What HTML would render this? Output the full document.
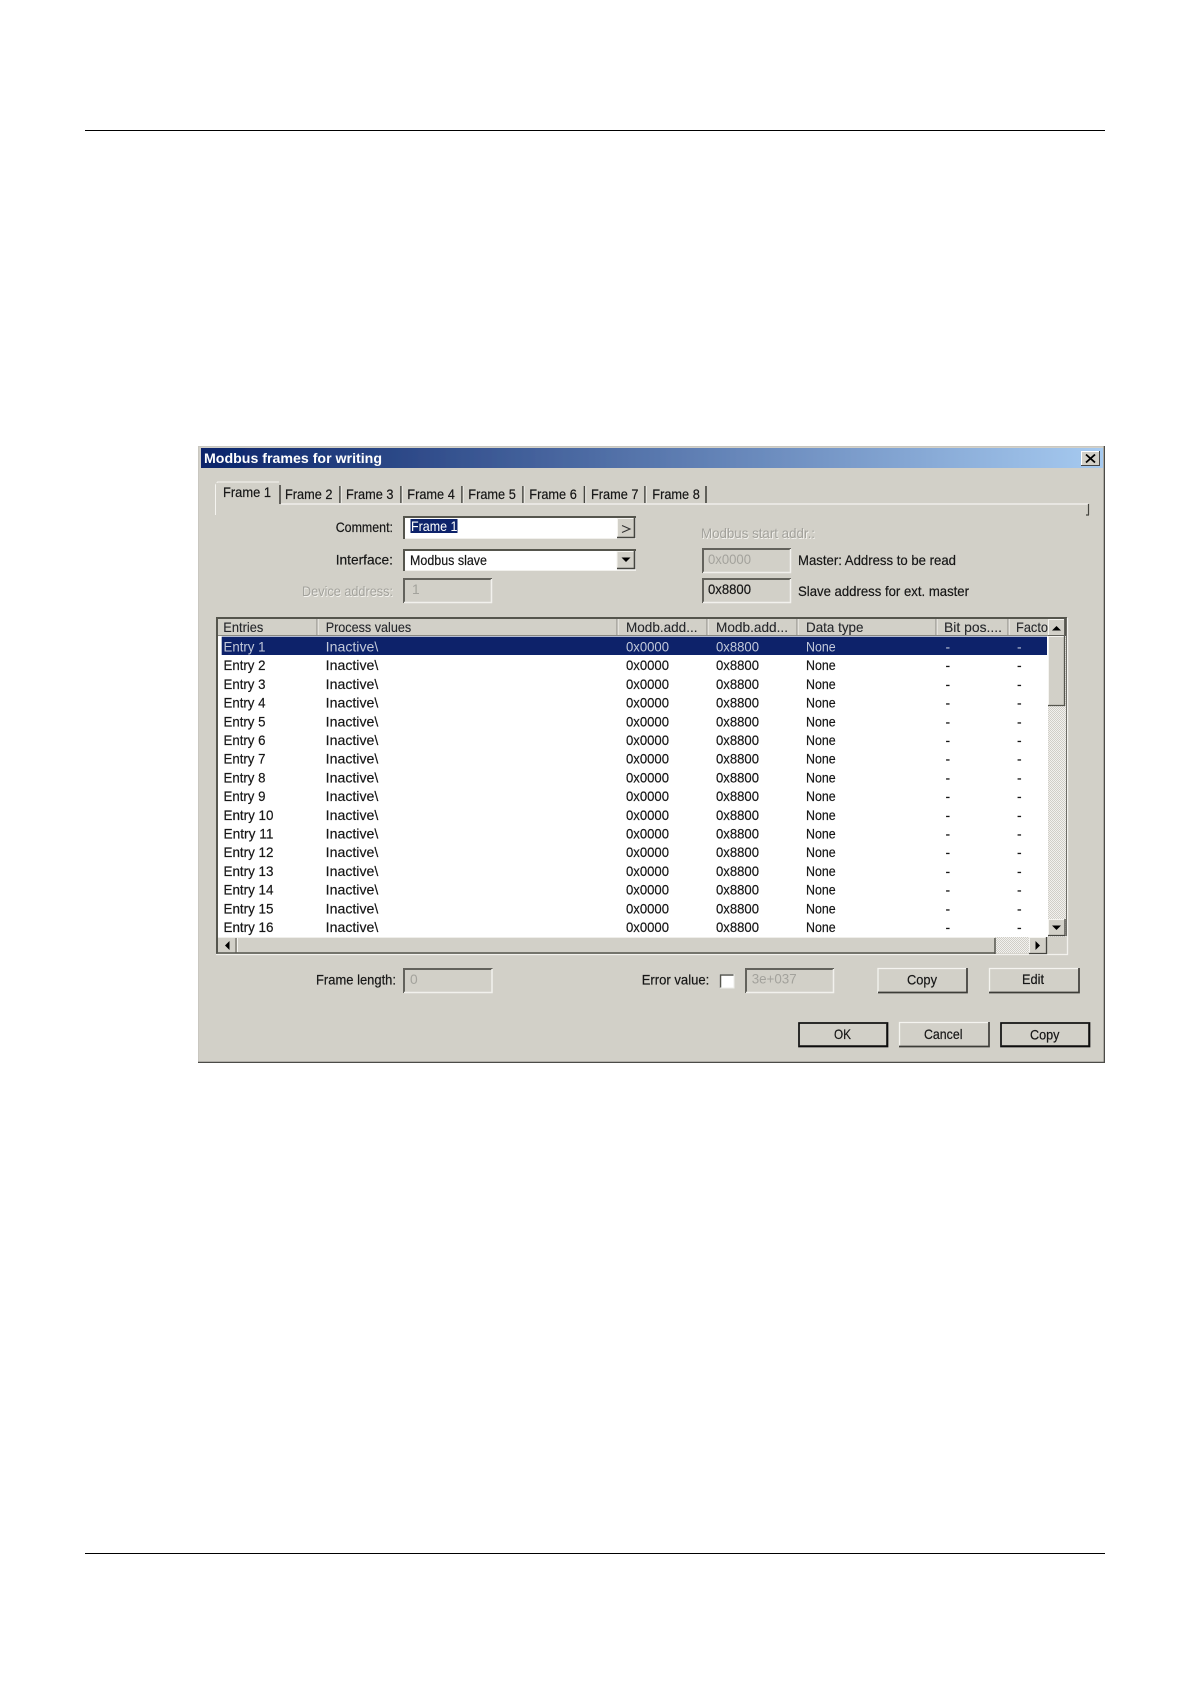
<!DOCTYPE html>
<html><head><meta charset="utf-8"><title>Modbus frames for writing</title>
<style>
html,body{margin:0;padding:0;background:#fff}
svg{display:block}
text{font-family:"Liberation Sans",Arial,sans-serif;font-size:13.8px;fill:#151515;stroke:#151515;stroke-width:.18px}
.g{fill:#a3a29c;stroke:none}
.gs{fill:#f4f3ef;stroke:none}
.w{fill:#fff;stroke:none}
.hd{fill:#25282c;stroke:#25282c;stroke-width:.1px}
.s text{fill:#c3c8da;stroke:none}
</style></head><body>
<svg xmlns="http://www.w3.org/2000/svg" width="1190" height="1684" viewBox="0 0 1190 1684">
<defs>
<linearGradient id="tg" x1="0" x2="1" y1="0" y2="0"><stop offset="0" stop-color="#0a246a"/><stop offset="1" stop-color="#a6caf0"/></linearGradient>
<pattern id="di" width="2" height="2" patternUnits="userSpaceOnUse"><rect width="2" height="2" fill="#f2f1ee"/><rect width="1" height="1" fill="#d0cec7"/><rect x="1" y="1" width="1" height="1" fill="#d0cec7"/></pattern>
<filter id="b" x="0" y="0" width="100%" height="100%"><feGaussianBlur stdDeviation="0.35"/></filter>
</defs>
<rect width="1190" height="1684" fill="#fff"/>
<rect x="85" y="130" width="1020" height="1" fill="#000"/>
<rect x="85" y="1553" width="1020" height="1" fill="#000"/>
<g filter="url(#b)">
<!-- dialog -->
<rect x="198" y="446" width="907" height="617" fill="#d2d0c8"/>
<path d="M198.500 1062V446.500H1105" fill="none" stroke="#c9c7c0"/>
<path d="M1104.500 446V1062.500H198" fill="none" stroke="#4c4b47" stroke-width="1.600"/>
<rect x="201" y="448" width="902" height="20" fill="url(#tg)"/>
<text x="204" y="463" textLength="178" lengthAdjust="spacingAndGlyphs" class="w" style="font-weight:bold;font-size:13.500px">Modbus frames for writing</text>
<!-- close -->
<rect x="1081" y="451" width="19" height="15" fill="#d2d0c8"/>
<path d="M1081.500 466V451.500H1100" fill="none" stroke="#fff"/>
<path d="M1099.500 451V465.500H1081" fill="none" stroke="#444"/>
<path d="M1086 454.500L1095 462.500M1095 454.500L1086 462.500" stroke="#000" stroke-width="1.800"/>
<!-- tabs -->
<path d="M215.500 515V485l2-3H279" fill="none" stroke="#f5f4f0"/>
<rect x="216" y="483" width="63" height="22" fill="#d2d0c8"/>
<path d="M280 485V504" stroke="#45443f" stroke-width="1.600"/>
<path d="M281 504H1088" stroke="#efeeea" stroke-width="1.500"/>
<path d="M1088.500 504V515M1086 515H1089" stroke="#45443f" stroke-width="1.200"/>
<path d="M340 486V503M401 486V503M462 486V503M523 486V503M584.500 486V503M645 486V503M706 486V503" stroke="#45443f" stroke-width="1.600"/>
<path d="M341.200 486V503M402.200 486V503M463.200 486V503M524.200 486V503M585.700 486V503M646.200 486V503" stroke="#f0efeb"/>
<text x="223" y="497" textLength="48" lengthAdjust="spacingAndGlyphs">Frame 1</text>
<text x="285" y="499" textLength="47.500" lengthAdjust="spacingAndGlyphs">Frame 2</text>
<text x="346" y="499" textLength="47.500" lengthAdjust="spacingAndGlyphs">Frame 3</text>
<text x="407.300" y="499" textLength="47.500" lengthAdjust="spacingAndGlyphs">Frame 4</text>
<text x="468.300" y="499" textLength="47.500" lengthAdjust="spacingAndGlyphs">Frame 5</text>
<text x="529.300" y="499" textLength="47.500" lengthAdjust="spacingAndGlyphs">Frame 6</text>
<text x="591" y="499" textLength="47.500" lengthAdjust="spacingAndGlyphs">Frame 7</text>
<text x="652.300" y="499" textLength="47.500" lengthAdjust="spacingAndGlyphs">Frame 8</text>
<!-- comment -->
<text x="335.700" y="532" textLength="57.300" lengthAdjust="spacingAndGlyphs">Comment:</text>
<rect x="403" y="516" width="233" height="23" fill="#f1f0ec"/>
<rect x="405" y="518" width="230" height="20" fill="#fff"/>
<path d="M404 539V517H636" fill="none" stroke="#55544e" stroke-width="2"/>
<rect x="410.500" y="519" width="47" height="14" fill="#0a246a"/>
<text x="411" y="531" textLength="46.500" lengthAdjust="spacingAndGlyphs" class="w">Frame 1</text>
<rect x="617" y="518" width="18" height="20" fill="#d2d0c8"/>
<path d="M617.500 538V518.500H635" fill="none" stroke="#f5f4f0"/>
<path d="M634.500 518V537.500H617" fill="none" stroke="#45443f" stroke-width="1.600"/>
<path d="M622 525.500l8 3.500l-8 3.500" fill="none" stroke="#333" stroke-width="1.100"/>
<!-- interface -->
<text x="335.700" y="564.500" textLength="57.300" lengthAdjust="spacingAndGlyphs">Interface:</text>
<rect x="403" y="549" width="233" height="22" fill="#f1f0ec"/>
<rect x="405" y="551" width="230" height="19" fill="#fff"/>
<path d="M404 571V550H636" fill="none" stroke="#55544e" stroke-width="2"/>
<text x="410" y="565" textLength="77" lengthAdjust="spacingAndGlyphs">Modbus slave</text>
<rect x="616.500" y="551" width="18.500" height="18" fill="#d2d0c8"/>
<path d="M617 569V551.500H635" fill="none" stroke="#f5f4f0"/>
<path d="M634.500 551V568.500H617" fill="none" stroke="#45443f" stroke-width="1.600"/>
<path d="M621.500 557.500h9l-4.500 4.500z" fill="#000"/>
<!-- device -->
<text x="302" y="596" textLength="91" lengthAdjust="spacingAndGlyphs" class="gs" dx="0.800" dy="0.800">Device address:</text>
<text x="302" y="596" textLength="91" lengthAdjust="spacingAndGlyphs" class="g">Device address:</text>
<path d="M404 603V579H492" fill="none" stroke="#63625c" stroke-width="2"/>
<path d="M491.500 579V602.500H404" fill="none" stroke="#f2f1ed" stroke-width="1.500"/>
<text x="412" y="594" class="g">1</text>
<!-- modbus start -->
<text x="701" y="538" textLength="114" lengthAdjust="spacingAndGlyphs" class="gs" dx="0.800" dy="0.800">Modbus start addr.:</text>
<text x="701" y="538" textLength="114" lengthAdjust="spacingAndGlyphs" class="g">Modbus start addr.:</text>
<path d="M703 573V549H791" fill="none" stroke="#63625c" stroke-width="2"/>
<path d="M790.500 549V572.500H703" fill="none" stroke="#f2f1ed" stroke-width="1.500"/>
<text x="708" y="564" textLength="43" lengthAdjust="spacingAndGlyphs" class="g">0x0000</text>
<text x="798" y="565" textLength="158" lengthAdjust="spacingAndGlyphs">Master: Address to be read</text>
<path d="M703 603V579H791" fill="none" stroke="#63625c" stroke-width="2"/>
<path d="M790.500 579V602.500H703" fill="none" stroke="#f2f1ed" stroke-width="1.500"/>
<text x="708" y="594" textLength="43" lengthAdjust="spacingAndGlyphs">0x8800</text>
<text x="798" y="596" textLength="171" lengthAdjust="spacingAndGlyphs">Slave address for ext. master</text>
<!-- list -->
<rect x="216" y="617" width="852" height="338" fill="#d2d0c8"/>
<rect x="218" y="636" width="830" height="301" fill="#fff"/>
<path d="M217 955V618H1066V936" fill="none" stroke="#55544e" stroke-width="2"/>
<path d="M1067.500 618V954.500H216" fill="none" stroke="#f3f2ee" stroke-width="1.300"/>
<path d="M218 635.500H1048" stroke="#8a8982"/>
<path d="M318 619V635M618 619V635M708 619V635M798 619V635M937 619V635M1009 619V635" stroke="#f5f4f0"/>
<path d="M317 619V635M617 619V635M707 619V635M797 619V635M936 619V635M1008 619V635" stroke="#8a8982"/>
<text x="223.300" y="632" textLength="40" lengthAdjust="spacingAndGlyphs" class="hd">Entries</text>
<text x="325.700" y="632" textLength="85.500" lengthAdjust="spacingAndGlyphs" class="hd">Process values</text>
<text x="626" y="632" textLength="71.500" lengthAdjust="spacingAndGlyphs" class="hd">Modb.add...</text>
<text x="716" y="632" textLength="72" lengthAdjust="spacingAndGlyphs" class="hd">Modb.add...</text>
<text x="806" y="632" textLength="57.500" lengthAdjust="spacingAndGlyphs" class="hd">Data type</text>
<text x="944" y="632" textLength="58" lengthAdjust="spacingAndGlyphs" class="hd">Bit pos....</text>
<text x="1016" y="632" textLength="32" lengthAdjust="spacingAndGlyphs" class="hd">Facto</text>
<!-- scroll vertical -->
<rect x="1048" y="636" width="18" height="301" fill="url(#di)"/>
<rect x="1048" y="619" width="17" height="17" fill="#d2d0c8"/>
<path d="M1048.500 636V619.500H1065" fill="none" stroke="#f5f4f0"/>
<path d="M1064.500 619V635.500H1048" fill="none" stroke="#63625c"/>
<path d="M1052 630.500h9l-4.500-4.500z" fill="#000"/>
<rect x="1048" y="636" width="17" height="70" fill="#d2d0c8"/>
<path d="M1048.500 706V636.500H1065" fill="none" stroke="#f5f4f0"/>
<path d="M1064.500 636V705.500H1048" fill="none" stroke="#55544e" stroke-width="1.300"/>
<rect x="1048" y="919" width="17" height="17" fill="#d2d0c8"/>
<path d="M1048.500 936V919.500H1065" fill="none" stroke="#f5f4f0"/>
<path d="M1065 919V935.500H1048" fill="none" stroke="#45443f" stroke-width="1.300"/>
<path d="M1052 925.500h9l-4.500 4.500z" fill="#000"/>
<!-- scroll horizontal -->
<rect x="218" y="937" width="777" height="17" fill="#d2d0c8"/>
<rect x="995" y="937" width="35" height="16" fill="url(#di)"/>
<path d="M218 937.500H995" stroke="#efeeea"/>
<path d="M218 953H995M995 938V954" stroke="#55544e" stroke-width="1.500"/>
<path d="M236 938V953" stroke="#55544e"/>
<path d="M237.500 938V952" stroke="#f5f4f0"/>
<path d="M229.500 941v9l-4.500-4.500z" fill="#000"/>
<rect x="1029" y="937" width="18" height="17" fill="#d2d0c8"/>
<path d="M1029.500 953V937.500H1047" fill="none" stroke="#f5f4f0"/>
<path d="M1046.500 937V953.500H1029" fill="none" stroke="#45443f" stroke-width="1.300"/>
<path d="M1035.500 941v9l4.500-4.500z" fill="#000"/>
<!-- rows -->
<rect x="221.700" y="636.700" width="825.300" height="18.300" fill="#0a246a"/>
<g class="s" transform="translate(0,651.500)"><text x="223.500" textLength="42" lengthAdjust="spacingAndGlyphs">Entry 1</text><text x="325.700" textLength="52.600" lengthAdjust="spacingAndGlyphs">Inactive\</text><text x="626" textLength="43" lengthAdjust="spacingAndGlyphs">0x0000</text><text x="716" textLength="43" lengthAdjust="spacingAndGlyphs">0x8800</text><text x="806" textLength="29.700" lengthAdjust="spacingAndGlyphs">None</text><text x="945.500">-</text><text x="1017">-</text></g>
<g transform="translate(0,670.200)"><text x="223.500" textLength="42" lengthAdjust="spacingAndGlyphs">Entry 2</text><text x="325.700" textLength="52.600" lengthAdjust="spacingAndGlyphs">Inactive\</text><text x="626" textLength="43" lengthAdjust="spacingAndGlyphs">0x0000</text><text x="716" textLength="43" lengthAdjust="spacingAndGlyphs">0x8800</text><text x="806" textLength="29.700" lengthAdjust="spacingAndGlyphs">None</text><text x="945.500">-</text><text x="1017">-</text></g>
<g transform="translate(0,688.900)"><text x="223.500" textLength="42" lengthAdjust="spacingAndGlyphs">Entry 3</text><text x="325.700" textLength="52.600" lengthAdjust="spacingAndGlyphs">Inactive\</text><text x="626" textLength="43" lengthAdjust="spacingAndGlyphs">0x0000</text><text x="716" textLength="43" lengthAdjust="spacingAndGlyphs">0x8800</text><text x="806" textLength="29.700" lengthAdjust="spacingAndGlyphs">None</text><text x="945.500">-</text><text x="1017">-</text></g>
<g transform="translate(0,707.600)"><text x="223.500" textLength="42" lengthAdjust="spacingAndGlyphs">Entry 4</text><text x="325.700" textLength="52.600" lengthAdjust="spacingAndGlyphs">Inactive\</text><text x="626" textLength="43" lengthAdjust="spacingAndGlyphs">0x0000</text><text x="716" textLength="43" lengthAdjust="spacingAndGlyphs">0x8800</text><text x="806" textLength="29.700" lengthAdjust="spacingAndGlyphs">None</text><text x="945.500">-</text><text x="1017">-</text></g>
<g transform="translate(0,726.300)"><text x="223.500" textLength="42" lengthAdjust="spacingAndGlyphs">Entry 5</text><text x="325.700" textLength="52.600" lengthAdjust="spacingAndGlyphs">Inactive\</text><text x="626" textLength="43" lengthAdjust="spacingAndGlyphs">0x0000</text><text x="716" textLength="43" lengthAdjust="spacingAndGlyphs">0x8800</text><text x="806" textLength="29.700" lengthAdjust="spacingAndGlyphs">None</text><text x="945.500">-</text><text x="1017">-</text></g>
<g transform="translate(0,745)"><text x="223.500" textLength="42" lengthAdjust="spacingAndGlyphs">Entry 6</text><text x="325.700" textLength="52.600" lengthAdjust="spacingAndGlyphs">Inactive\</text><text x="626" textLength="43" lengthAdjust="spacingAndGlyphs">0x0000</text><text x="716" textLength="43" lengthAdjust="spacingAndGlyphs">0x8800</text><text x="806" textLength="29.700" lengthAdjust="spacingAndGlyphs">None</text><text x="945.500">-</text><text x="1017">-</text></g>
<g transform="translate(0,763.700)"><text x="223.500" textLength="42" lengthAdjust="spacingAndGlyphs">Entry 7</text><text x="325.700" textLength="52.600" lengthAdjust="spacingAndGlyphs">Inactive\</text><text x="626" textLength="43" lengthAdjust="spacingAndGlyphs">0x0000</text><text x="716" textLength="43" lengthAdjust="spacingAndGlyphs">0x8800</text><text x="806" textLength="29.700" lengthAdjust="spacingAndGlyphs">None</text><text x="945.500">-</text><text x="1017">-</text></g>
<g transform="translate(0,782.400)"><text x="223.500" textLength="42" lengthAdjust="spacingAndGlyphs">Entry 8</text><text x="325.700" textLength="52.600" lengthAdjust="spacingAndGlyphs">Inactive\</text><text x="626" textLength="43" lengthAdjust="spacingAndGlyphs">0x0000</text><text x="716" textLength="43" lengthAdjust="spacingAndGlyphs">0x8800</text><text x="806" textLength="29.700" lengthAdjust="spacingAndGlyphs">None</text><text x="945.500">-</text><text x="1017">-</text></g>
<g transform="translate(0,801.100)"><text x="223.500" textLength="42" lengthAdjust="spacingAndGlyphs">Entry 9</text><text x="325.700" textLength="52.600" lengthAdjust="spacingAndGlyphs">Inactive\</text><text x="626" textLength="43" lengthAdjust="spacingAndGlyphs">0x0000</text><text x="716" textLength="43" lengthAdjust="spacingAndGlyphs">0x8800</text><text x="806" textLength="29.700" lengthAdjust="spacingAndGlyphs">None</text><text x="945.500">-</text><text x="1017">-</text></g>
<g transform="translate(0,819.800)"><text x="223.500" textLength="50" lengthAdjust="spacingAndGlyphs">Entry 10</text><text x="325.700" textLength="52.600" lengthAdjust="spacingAndGlyphs">Inactive\</text><text x="626" textLength="43" lengthAdjust="spacingAndGlyphs">0x0000</text><text x="716" textLength="43" lengthAdjust="spacingAndGlyphs">0x8800</text><text x="806" textLength="29.700" lengthAdjust="spacingAndGlyphs">None</text><text x="945.500">-</text><text x="1017">-</text></g>
<g transform="translate(0,838.500)"><text x="223.500" textLength="50" lengthAdjust="spacingAndGlyphs">Entry 11</text><text x="325.700" textLength="52.600" lengthAdjust="spacingAndGlyphs">Inactive\</text><text x="626" textLength="43" lengthAdjust="spacingAndGlyphs">0x0000</text><text x="716" textLength="43" lengthAdjust="spacingAndGlyphs">0x8800</text><text x="806" textLength="29.700" lengthAdjust="spacingAndGlyphs">None</text><text x="945.500">-</text><text x="1017">-</text></g>
<g transform="translate(0,857.200)"><text x="223.500" textLength="50" lengthAdjust="spacingAndGlyphs">Entry 12</text><text x="325.700" textLength="52.600" lengthAdjust="spacingAndGlyphs">Inactive\</text><text x="626" textLength="43" lengthAdjust="spacingAndGlyphs">0x0000</text><text x="716" textLength="43" lengthAdjust="spacingAndGlyphs">0x8800</text><text x="806" textLength="29.700" lengthAdjust="spacingAndGlyphs">None</text><text x="945.500">-</text><text x="1017">-</text></g>
<g transform="translate(0,875.900)"><text x="223.500" textLength="50" lengthAdjust="spacingAndGlyphs">Entry 13</text><text x="325.700" textLength="52.600" lengthAdjust="spacingAndGlyphs">Inactive\</text><text x="626" textLength="43" lengthAdjust="spacingAndGlyphs">0x0000</text><text x="716" textLength="43" lengthAdjust="spacingAndGlyphs">0x8800</text><text x="806" textLength="29.700" lengthAdjust="spacingAndGlyphs">None</text><text x="945.500">-</text><text x="1017">-</text></g>
<g transform="translate(0,894.600)"><text x="223.500" textLength="50" lengthAdjust="spacingAndGlyphs">Entry 14</text><text x="325.700" textLength="52.600" lengthAdjust="spacingAndGlyphs">Inactive\</text><text x="626" textLength="43" lengthAdjust="spacingAndGlyphs">0x0000</text><text x="716" textLength="43" lengthAdjust="spacingAndGlyphs">0x8800</text><text x="806" textLength="29.700" lengthAdjust="spacingAndGlyphs">None</text><text x="945.500">-</text><text x="1017">-</text></g>
<g transform="translate(0,913.300)"><text x="223.500" textLength="50" lengthAdjust="spacingAndGlyphs">Entry 15</text><text x="325.700" textLength="52.600" lengthAdjust="spacingAndGlyphs">Inactive\</text><text x="626" textLength="43" lengthAdjust="spacingAndGlyphs">0x0000</text><text x="716" textLength="43" lengthAdjust="spacingAndGlyphs">0x8800</text><text x="806" textLength="29.700" lengthAdjust="spacingAndGlyphs">None</text><text x="945.500">-</text><text x="1017">-</text></g>
<g transform="translate(0,932)"><text x="223.500" textLength="50" lengthAdjust="spacingAndGlyphs">Entry 16</text><text x="325.700" textLength="52.600" lengthAdjust="spacingAndGlyphs">Inactive\</text><text x="626" textLength="43" lengthAdjust="spacingAndGlyphs">0x0000</text><text x="716" textLength="43" lengthAdjust="spacingAndGlyphs">0x8800</text><text x="806" textLength="29.700" lengthAdjust="spacingAndGlyphs">None</text><text x="945.500">-</text><text x="1017">-</text></g>
<!-- bottom row -->
<text x="316" y="984.300" textLength="80" lengthAdjust="spacingAndGlyphs">Frame length:</text>
<path d="M404 993V969H492.500" fill="none" stroke="#63625c" stroke-width="2"/>
<path d="M492 969V992.500H404" fill="none" stroke="#f2f1ed" stroke-width="1.500"/>
<text x="410" y="984" class="g">0</text>
<text x="641.700" y="984.300" textLength="67.600" lengthAdjust="spacingAndGlyphs">Error value:</text>
<rect x="719.500" y="974" width="14.500" height="14" fill="#fff"/>
<path d="M720.500 988V975H734" fill="none" stroke="#55544e" stroke-width="1.500"/>
<path d="M734 974V988H720" fill="none" stroke="#eeeeea"/>
<path d="M746 993V969H834" fill="none" stroke="#63625c" stroke-width="2"/>
<path d="M833.500 969V992.500H746" fill="none" stroke="#f2f1ed" stroke-width="1.500"/>
<text x="751.700" y="983.500" textLength="45" lengthAdjust="spacingAndGlyphs" class="g">3e+037</text>
<!-- buttons -->
<path d="M878 993V968.500H967" fill="none" stroke="#f5f4f0" stroke-width="1.300"/>
<path d="M967 968V992.500H878" fill="none" stroke="#3e3d39" stroke-width="1.700"/>
<text x="907" y="984.500" textLength="30" lengthAdjust="spacingAndGlyphs">Copy</text>
<path d="M989.500 993V968.500H1079" fill="none" stroke="#f5f4f0" stroke-width="1.300"/>
<path d="M1079 968V992.500H989" fill="none" stroke="#3e3d39" stroke-width="1.700"/>
<text x="1022" y="984" textLength="22" lengthAdjust="spacingAndGlyphs">Edit</text>
<rect x="799" y="1023" width="88.500" height="23.500" fill="none" stroke="#111" stroke-width="1.700"/>
<path d="M887 1024V1046H800" fill="none" stroke="#111" stroke-width="1.600"/>
<text x="834" y="1039" textLength="17" lengthAdjust="spacingAndGlyphs">OK</text>
<path d="M899.500 1047V1022.500H989" fill="none" stroke="#f5f4f0" stroke-width="1.300"/>
<path d="M989 1022V1046.500H899" fill="none" stroke="#3e3d39" stroke-width="1.700"/>
<text x="924" y="1039" textLength="38.500" lengthAdjust="spacingAndGlyphs">Cancel</text>
<rect x="1001" y="1023" width="88.500" height="23.500" fill="none" stroke="#111" stroke-width="1.700"/>
<path d="M1089 1024V1046H1002" fill="none" stroke="#111" stroke-width="1.600"/>
<text x="1030" y="1039.500" textLength="29.500" lengthAdjust="spacingAndGlyphs">Copy</text>
</g>
</svg>
</body></html>
